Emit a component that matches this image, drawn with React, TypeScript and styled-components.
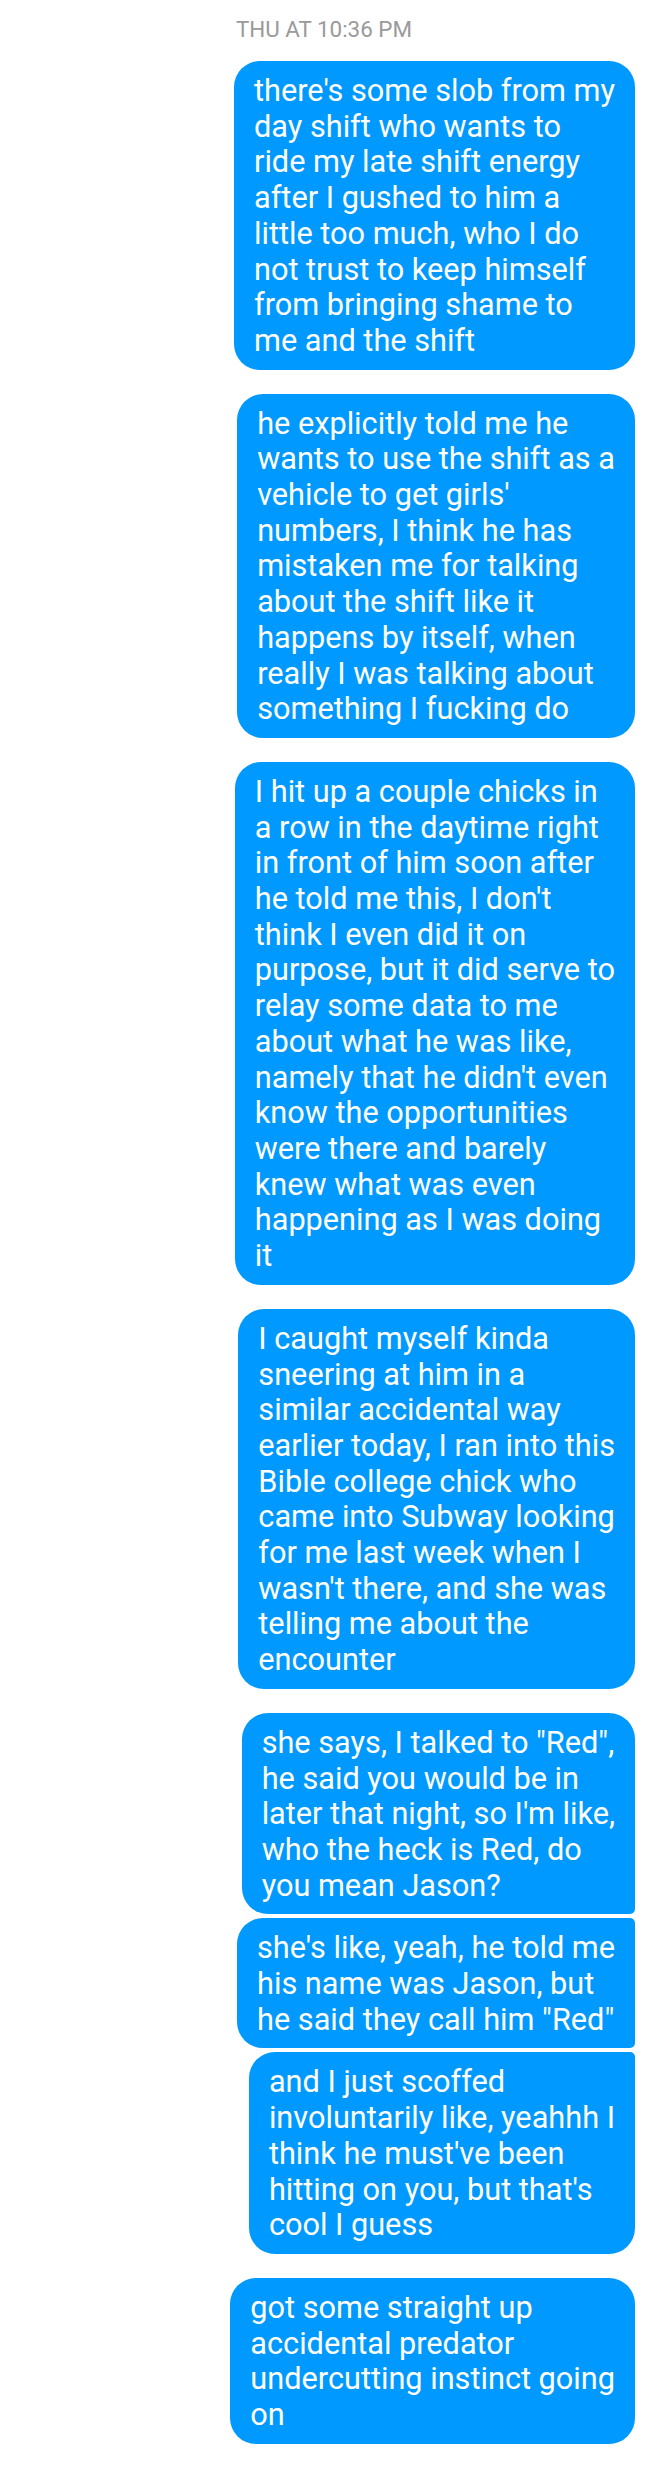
import React from "react";
import styled, { createGlobalStyle, css } from "styled-components";

const GlobalStyle = createGlobalStyle`
  html, body {
    margin: 0;
    padding: 0;
    background: #ffffff;
  }
  body {
    font-family: Roboto, "Noto Sans", "Liberation Sans", sans-serif;
  }
`;

type Pos = "single" | "first" | "middle" | "last";

const Thread = styled.div`
  width: 648px;
  box-sizing: border-box;
  padding: 17px 13px 22px 0;
  display: flex;
  flex-direction: column;
  align-items: flex-end;
`;

const Timestamp = styled.div`
  align-self: center;
  margin-left: 13px;
  font-size: 22.4px;
  line-height: 24px;
  color: #9a9a9a;
  margin-bottom: 20px;
`;

const big = "26px";
const small = "5px";

const Bubble = styled.div<{ $pos: Pos }>`
  box-sizing: border-box;
  width: fit-content;
  background: #0099ff;
  color: #ffffff;
  font-size: 30.7px;
  line-height: 35.7px;
  padding: 12px 20px 11px 20px;
  white-space: nowrap;
  border-radius: ${big};
  margin-top: ${(p) => (p.$pos === "middle" || p.$pos === "last" ? "4px" : "24px")};
  ${(p) =>
    p.$pos === "first" &&
    css`
      border-bottom-right-radius: ${small};
    `}
  ${(p) =>
    p.$pos === "middle" &&
    css`
      border-top-right-radius: ${small};
      border-bottom-right-radius: ${small};
    `}
  ${(p) =>
    p.$pos === "last" &&
    css`
      border-top-right-radius: ${small};
    `}
  &:first-of-type {
    margin-top: 0;
  }
`;

const Line = styled.span`
  display: block;
`;

const messages: { pos: Pos; lines: string[] }[] = [
  {
    pos: "single",
    lines: [
      "there's some slob from my",
      "day shift who wants to",
      "ride my late shift energy",
      "after I gushed to him a",
      "little too much, who I do",
      "not trust to keep himself",
      "from bringing shame to",
      "me and the shift",
    ],
  },
  {
    pos: "single",
    lines: [
      "he explicitly told me he",
      "wants to use the shift as a",
      "vehicle to get girls'",
      "numbers, I think he has",
      "mistaken me for talking",
      "about the shift like it",
      "happens by itself, when",
      "really I was talking about",
      "something I fucking do",
    ],
  },
  {
    pos: "single",
    lines: [
      "I hit up a couple chicks in",
      "a row in the daytime right",
      "in front of him soon after",
      "he told me this, I don't",
      "think I even did it on",
      "purpose, but it did serve to",
      "relay some data to me",
      "about what he was like,",
      "namely that he didn't even",
      "know the opportunities",
      "were there and barely",
      "knew what was even",
      "happening as I was doing",
      "it",
    ],
  },
  {
    pos: "single",
    lines: [
      "I caught myself kinda",
      "sneering at him in a",
      "similar accidental way",
      "earlier today, I ran into this",
      "Bible college chick who",
      "came into Subway looking",
      "for me last week when I",
      "wasn't there, and she was",
      "telling me about the",
      "encounter",
    ],
  },
  {
    pos: "first",
    lines: [
      'she says, I talked to "Red",',
      "he said you would be in",
      "later that night, so I'm like,",
      "who the heck is Red, do",
      "you mean Jason?",
    ],
  },
  {
    pos: "middle",
    lines: [
      "she's like, yeah, he told me",
      "his name was Jason, but",
      'he said they call him "Red"',
    ],
  },
  {
    pos: "last",
    lines: [
      "and I just scoffed",
      "involuntarily like, yeahhh I",
      "think he must've been",
      "hitting on you, but that's",
      "cool I guess",
    ],
  },
  {
    pos: "single",
    lines: [
      "got some straight up",
      "accidental predator",
      "undercutting instinct going",
      "on",
    ],
  },
];

const Bubbles = styled.div`
  display: flex;
  flex-direction: column;
  align-items: flex-end;
`;

export default function App() {
  return (
    <>
      <GlobalStyle />
      <Thread>
        <Timestamp>THU AT 10:36 PM</Timestamp>
        <Bubbles>
          {messages.map((m, i) => (
            <Bubble key={i} $pos={m.pos}>
              {m.lines.map((l, j) => (
                <Line key={j}>{l}</Line>
              ))}
            </Bubble>
          ))}
        </Bubbles>
      </Thread>
    </>
  );
}
